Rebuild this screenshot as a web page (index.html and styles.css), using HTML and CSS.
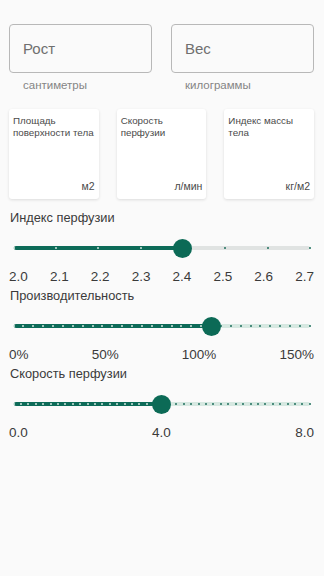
FILE: index.html
```html
<!DOCTYPE html>
<html lang="ru">
<head>
    <meta charset="UTF-8">
    <meta name="viewport" content="width=device-width, initial-scale=1.0">
    <title>Перфузия</title>
    <link rel="stylesheet" href="styles.css">
</head>
<body>
    <div class="page">
        <div class="inputs">
            <div class="field">
                <input type="text" placeholder="Рост">
                <div class="hint">сантиметры</div>
            </div>
            <div class="field">
                <input type="text" placeholder="Вес">
                <div class="hint">килограммы</div>
            </div>
        </div>

        <div class="cards">
            <div class="card">
                <div class="card-title">Площадь поверхности тела</div>
                <div class="card-unit">м2</div>
            </div>
            <div class="card">
                <div class="card-title">Скорость перфузии</div>
                <div class="card-unit">л/мин</div>
            </div>
            <div class="card">
                <div class="card-title">Индекс массы тела</div>
                <div class="card-unit">кг/м2</div>
            </div>
        </div>

        <div class="section">
            <div class="section-title">Индекс перфузии</div>
            <div class="slider gray" data-steps="7" data-value="4">
                <div class="track"></div>
                <div class="fill"></div>
                <div class="ticks"></div>
                <div class="thumb"></div>
            </div>
            <div class="scale">
                <span>2.0</span><span>2.1</span><span>2.2</span><span>2.3</span>
                <span>2.4</span><span>2.5</span><span>2.6</span><span>2.7</span>
            </div>
        </div>

        <div class="section">
            <div class="section-title">Производительность</div>
            <div class="slider" data-steps="30" data-value="20">
                <div class="track"></div>
                <div class="fill"></div>
                <div class="ticks"></div>
                <div class="thumb"></div>
            </div>
            <div class="scale">
                <span>0%</span><span>50%</span><span>100%</span><span>150%</span>
            </div>
        </div>

        <div class="section">
            <div class="section-title">Скорость перфузии</div>
            <div class="slider" data-steps="40" data-value="20">
                <div class="track"></div>
                <div class="fill"></div>
                <div class="ticks"></div>
                <div class="thumb"></div>
            </div>
            <div class="scale">
                <span>0.0</span><span>4.0</span><span>8.0</span>
            </div>
        </div>
    </div>

    <script>
        // Build tick dots and place the fill and thumb for each slider
        document.querySelectorAll('.slider').forEach(function (slider) {
            const steps = parseInt(slider.dataset.steps);
            const value = parseInt(slider.dataset.value);
            const ticks = slider.querySelector('.ticks');

            for (let i = 0; i <= steps; i++) {
                const dot = document.createElement('span');
                dot.className = i <= value ? 'dot on' : 'dot';
                ticks.appendChild(dot);
            }

            const pct = (value / steps * 100) + '%';
            slider.querySelector('.fill').style.width = pct;
            slider.querySelector('.thumb').style.left = pct;
        });
    </script>
</body>
</html>
```

FILE: styles.css
```css
body {
    margin: 0;
    background-color: #fafafa;
    font-family: "Liberation Sans", Arial, sans-serif;
    color: #333;
}

.page {
    padding: 24px 10px 0 9px;
}

.inputs {
    display: flex;
    gap: 19px;
}

.field {
    flex: 1;
}

.field input {
    box-sizing: border-box;
    width: 100%;
    height: 49px;
    padding: 0 13px;
    border: 1px solid #b8b8b8;
    border-radius: 4px;
    background: transparent;
    font-family: inherit;
    font-size: 15px;
    outline: none;
}

.field input::placeholder {
    color: #6f6f6f;
}

.hint {
    margin-top: 6px;
    padding-left: 14px;
    font-size: 11.5px;
    color: #858585;
}

.cards {
    display: flex;
    gap: 18px;
    margin-top: 18px;
}

.card {
    flex: 1;
    height: 90px;
    box-sizing: border-box;
    padding: 6px 4px 7px 4px;
    background-color: #fff;
    border-radius: 3px;
    box-shadow: 0 1px 3px rgba(0, 0, 0, 0.12);
    display: flex;
    flex-direction: column;
    justify-content: space-between;
    font-size: 9.8px;
    color: #4a4a4a;
}

.card-title {
    line-height: 12px;
}

.card-unit {
    text-align: right;
    font-size: 10.5px;
}

.cards + .section {
    margin-top: 9px;
}

.section-title {
    padding-left: 1px;
    font-size: 12.8px;
    line-height: 19px;
    color: #3a3a3a;
}

.slider {
    position: relative;
    height: 20px;
    margin: 11px 4px 0 4.5px;
}

.track,
.fill {
    position: absolute;
    top: 8px;
    left: 0;
    height: 4px;
    border-radius: 2px;
}

.track {
    right: 0;
    background-color: #d6e8e1;
}

.slider.gray .track {
    background-color: #e0e3e2;
}

.fill {
    background-color: #0d6b58;
}

.ticks {
    position: absolute;
    top: 9px;
    left: -1px;
    right: -1px;
    display: flex;
    justify-content: space-between;
}

.dot {
    width: 2px;
    height: 2px;
    border-radius: 50%;
    background-color: #1f6f5c;
}

.dot.on {
    background-color: #cfe5dc;
}

.thumb {
    position: absolute;
    top: 0.5px;
    width: 19px;
    height: 19px;
    margin-left: -9.5px;
    border-radius: 50%;
    background-color: #0c6a56;
}

.scale {
    display: flex;
    justify-content: space-between;
    margin-top: 10px;
    font-size: 13.5px;
    line-height: 18px;
    color: #3a3a3a;
}
```
